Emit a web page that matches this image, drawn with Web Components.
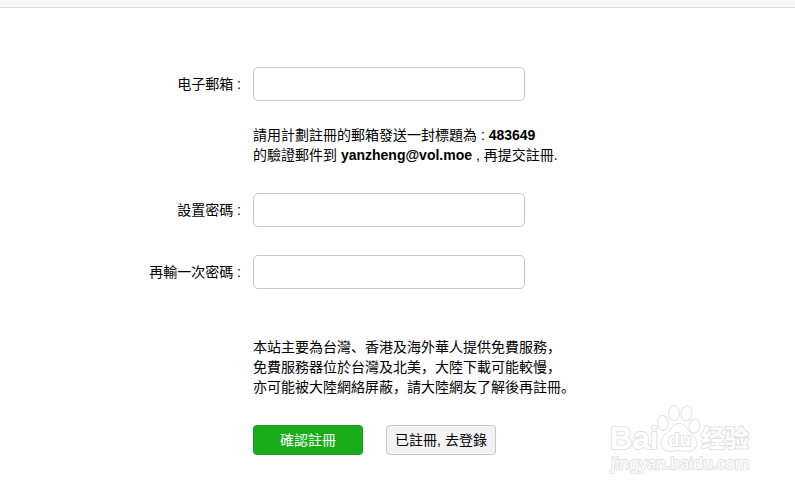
<!DOCTYPE html>
<html lang="zh-Hans">
<head>
<meta charset="utf-8">
<meta name="viewport" content="width=device-width, initial-scale=1">
<title>註冊</title>
<style>
  body {
    margin: 0;
    background: #fff;
    color: #000;
    font: 14px/20px "Liberation Sans", "Noto Sans CJK SC", sans-serif;
  }
</style>
</head>
<body>
<register-page></register-page>

<script>
class TopBar extends HTMLElement {
  constructor() {
    super();
    this.attachShadow({ mode: 'open' });
  }

  connectedCallback() {
    this.shadowRoot.innerHTML = `
      <style>
        :host {
          display: block;
          height: 7px;
          background: #f7f7f7;
          border-bottom: 1px solid #ddd;
        }
      </style>
    `;
  }
}

class FormRow extends HTMLElement {
  constructor() {
    super();
    this.attachShadow({ mode: 'open' });
  }

  connectedCallback() {
    const label = this.getAttribute('label');
    const type = this.getAttribute('type') || 'text';
    this.shadowRoot.innerHTML = `
      <style>
        :host {
          display: grid;
          grid-template-columns: 93px minmax(0, 1fr);
          column-gap: 12px;
          align-items: center;
        }

        label {
          text-align: right;
          white-space: nowrap;
        }

        input {
          box-sizing: border-box;
          width: 100%;
          max-width: 272px;
          height: 34px;
          padding: 6px 10px;
          border: 1px solid #c8c8c8;
          border-radius: 5px;
          background: #fff;
          font: inherit;
          outline: none;
        }

        .content {
          grid-column: 2;
        }
      </style>

      ${label
        ? `<label for="field">${label} :</label><input id="field" type="${type}">`
        : '<div class="content"><slot></slot></div>'}
    `;
  }
}

class ActionButton extends HTMLElement {
  constructor() {
    super();
    this.attachShadow({ mode: 'open' });
  }

  connectedCallback() {
    this.shadowRoot.innerHTML = `
      <style>
        :host {
          display: block;
        }

        button {
          box-sizing: border-box;
          width: 110px;
          height: 30px;
          padding: 0;
          border: 1px solid #c8c8c8;
          border-radius: 4px;
          background: #f3f3f3;
          color: #000;
          font: inherit;
          white-space: nowrap;
          cursor: pointer;
        }

        :host([primary]) button {
          border-color: #179b16;
          background: #1aad19;
          color: #fff;
        }
      </style>

      <button type="button"><slot></slot></button>
    `;
  }
}

class SiteMark extends HTMLElement {
  constructor() {
    super();
    this.attachShadow({ mode: 'open' });
  }

  connectedCallback() {
    this.shadowRoot.innerHTML = `
      <style>
        :host {
          display: block;
          pointer-events: none;
        }

        svg {
          display: block;
          overflow: visible;
        }

        text {
          fill: #fff;
          stroke: #e2e2e2;
          stroke-width: 2;
          stroke-linejoin: round;
          paint-order: stroke;
          font-family: "Liberation Sans", "Noto Sans CJK SC", sans-serif;
          font-weight: bold;
        }

        .url {
          font-family: "Noto Sans", sans-serif;
          font-weight: normal;
        }

        .paw {
          fill: #fff;
          stroke: #e2e2e2;
        }
      </style>

      <svg width="144" height="76" viewBox="0 0 144 76">
        <text x="1" y="48" font-size="31">Bai</text>
        <g class="paw">
          <ellipse cx="54" cy="22" rx="5.5" ry="7.5" transform="rotate(-6 54 22)"/>
          <ellipse cx="65" cy="12" rx="5.5" ry="7.5"/>
          <ellipse cx="77.500" cy="12.500" rx="5.500" ry="7.500" transform="rotate(10 77.500 12.500)"/>
          <ellipse cx="85.500" cy="25" rx="5.500" ry="7" transform="rotate(10 85.500 25)"/>
          <path d="M70 22.500C63 22.500 62 29 57 33C52 37 51 42 53 46C56 52 63 50 70 49.500C77 50 84 52 87 46C89 41 87 37 83 33C78 29 77 22.500 70 22.500Z"/>
        </g>
        <text x="59" y="45" font-size="19">du</text>
        <text x="92" y="46" font-size="24">经验</text>
        <text class="url" x="2" y="68" font-size="16">jingyan.baidu.com</text>
      </svg>
    `;
  }
}

class RegisterPage extends HTMLElement {
  constructor() {
    super();
    this.attachShadow({ mode: 'open' });
  }

  connectedCallback() {
    this.shadowRoot.innerHTML = `
      <style>
        :host {
          display: block;
          position: relative;
          min-height: 100vh;
        }

        form {
          display: flex;
          flex-direction: column;
          gap: 28px;
          max-width: 499px;
          margin: 0 auto;
          padding: 59px 0 36px;
        }

        p {
          margin: 0;
        }

        .hint {
          margin-top: -4px;
        }

        .notice {
          margin-top: 20px;
        }

        .actions {
          display: flex;
          flex-wrap: wrap;
          gap: 23px;
        }

        site-mark {
          position: absolute;
          right: 42px;
          bottom: 14px;
        }
      </style>

      <top-bar></top-bar>
      <form>
        <form-row label="电子郵箱" type="email"></form-row>
        <form-row class="hint">
          <p>請用計劃註冊的郵箱發送一封標題為 : <b>483649</b><br>
          的驗證郵件到 <b>yanzheng@vol.moe</b> , 再提交註冊.</p>
        </form-row>
        <form-row label="設置密碼" type="password"></form-row>
        <form-row label="再輸一次密碼" type="password"></form-row>
        <form-row class="notice">
          <p>本站主要為台灣、香港及海外華人提供免費服務，<br>
          免費服務器位於台灣及北美，大陸下載可能較慢，<br>
          亦可能被大陸網絡屏蔽，請大陸網友了解後再註冊。</p>
        </form-row>
        <form-row>
          <div class="actions">
            <action-button primary>確認註冊</action-button>
            <action-button>已註冊, 去登錄</action-button>
          </div>
        </form-row>
      </form>
      <site-mark></site-mark>
    `;
  }
}

customElements.define('top-bar', TopBar);
customElements.define('form-row', FormRow);
customElements.define('action-button', ActionButton);
customElements.define('site-mark', SiteMark);
customElements.define('register-page', RegisterPage);
</script>
</body>
</html>
